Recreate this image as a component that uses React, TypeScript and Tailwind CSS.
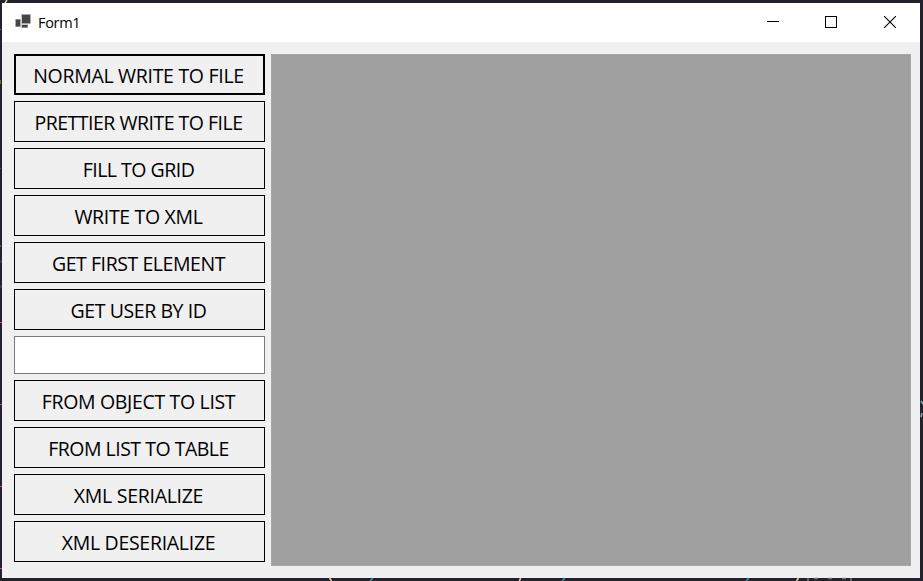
const actions = [
  { label: 'NORMAL WRITE TO FILE', tracking: 'tracking-[-0.3px]' },
  { label: 'PRETTIER WRITE TO FILE', tracking: 'tracking-[-0.5px]' },
  { label: 'FILL TO GRID', tracking: 'tracking-[-0.5px]' },
  { label: 'WRITE TO XML', tracking: 'tracking-[-0.32px]' },
  { label: 'GET FIRST ELEMENT', tracking: 'tracking-[-0.43px]' },
  { label: 'GET USER BY ID', tracking: 'tracking-[-0.43px]' },
];
const conversions = [
  { label: 'FROM OBJECT TO LIST', tracking: 'tracking-[-0.33px]' },
  { label: 'FROM LIST TO TABLE', tracking: 'tracking-[-0.5px]' },
  { label: 'XML SERIALIZE', tracking: 'tracking-[-0.28px]' },
  { label: 'XML DESERIALIZE', tracking: 'tracking-[-0.29px]' },
];

function FormButton({ label, tracking, focused = false }: { label: string; tracking: string; focused?: boolean }) {
  return (
    <button
      className={`flex h-[41px] w-full shrink-0 items-center justify-center whitespace-nowrap border-black bg-[#f0f0f0] pr-[2px] pt-[2px] text-[19.5px] leading-none text-black ${focused ? 'border-2' : 'border'}`}
    >
      <span className={tracking}>{label}</span>
    </button>
  );
}

// Fragments of the editor that show round the window's edges.
function Backdrop() {
  return (
    <svg className="pointer-events-none absolute inset-0" width="923" height="581" shapeRendering="crispEdges">
      <path d="M0 168.5h1" stroke="#c02028" />
      <path d="M0 322.5h2M0 404.5h2M0 486.5h2M0 568.5h2" stroke="#e04878" />
      <path d="M0 82h1" stroke="#4d7a35" strokeWidth="4" />
      <path d="M0 246h1" stroke="#655b2c" strokeWidth="2" />
      <path d="M0 261.500h2M0 286.500h2" stroke="#33364b" strokeWidth="3" />
      <path d="M0 29.5h1" stroke="#52717d" />
      <g shapeRendering="auto" strokeWidth="1.6" fill="none">
        <path d="M5 3l2-3M329.500 578l2 3M520.500 578l-1 3M798.500 578l-2 3" stroke="#e2cda9" />
        <path d="M372.500 578l-2 3M564.500 578l-2 3M748.500 578l-2 3" stroke="#438da7" />
        <path d="M921 401l2 3M922 413l-1 4" stroke="#78a9be" />
        <path d="M808 578v3M851 578v3M814 578.500h4M828 578.500h4M842 578.500h4" stroke="#777478" />
      </g>
    </svg>
  );
}

export default function App() {
  return (
    <div className="relative h-[581px] w-[923px] overflow-hidden bg-[#22212d] pl-[2px] pr-[3px] pt-[3px] font-['Open_Sans','Noto_Sans',sans-serif]">
      <Backdrop />
      <div className="flex h-[575px] flex-col bg-[#f0f0f0]">
        <header className="flex h-[39px] shrink-0 items-center bg-white pb-px pl-[13px]">
          <svg width="17" height="16" viewBox="0 0 17 16" className="shrink-0">
            <path d="M0 5h6v8H0zM6 0h10v10H6zM6 10h7v4H6z" fill="#c9c9c9" />
            <path d="M.8 5.500h4.400v7H.8zM7 .8h8.200v8.400H7zM7 11h5.500v2.500H7z" fill="#454545" />
          </svg>
          <h1 className="ml-[6px] pt-[2px] text-[14.500px] leading-none tracking-[-0.3px] text-black">Form1</h1>
          <div className="ml-auto flex h-full">
            <button aria-label="Minimize" className="flex h-full w-[58px] items-center justify-center">
              <svg width="12" height="12" shapeRendering="crispEdges"><path d="M0 5.500h12" stroke="#000" /></svg>
            </button>
            <button aria-label="Maximize" className="flex h-full w-[58px] items-center justify-center">
              <svg width="12" height="12" shapeRendering="crispEdges"><path d="M.5.5h11v11H.5z" fill="none" stroke="#000" /></svg>
            </button>
            <button aria-label="Close" className="flex h-full w-[60px] items-center justify-center">
              <svg width="12" height="12"><path d="M0 0l12 12M12 0L0 12" stroke="#000" strokeWidth="1.100" /></svg>
            </button>
          </div>
        </header>
        <main className="flex flex-1 gap-[6px] pl-[12px] pr-[9px] pt-[12px]">
          <div className="flex w-[251px] shrink-0 flex-col gap-[6px]">
            {actions.map((a, i) => <FormButton key={a.label} {...a} focused={i === 0} />)}
            <input type="text" aria-label="User ID" className="h-[38px] w-full shrink-0 border border-[#7a7a7a] bg-white px-2 outline-none" />
            {conversions.map((a) => <FormButton key={a.label} {...a} />)}
          </div>
          <section className="h-[512px] flex-1 border border-[#a5a5aa] bg-[#a0a0a0]" />
        </main>
      </div>
    </div>
  );
}
